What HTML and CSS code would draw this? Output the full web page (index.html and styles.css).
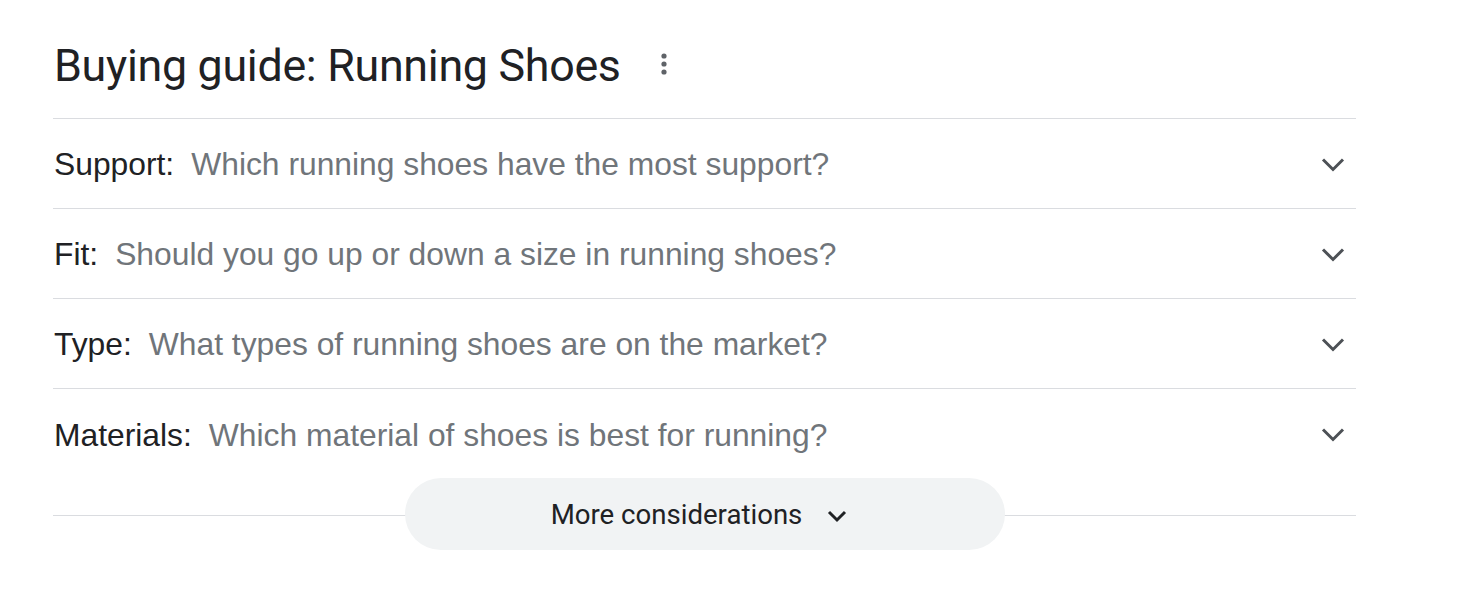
FILE: index.html
```html
<!DOCTYPE html>
<html>
<head>
<meta charset="utf-8">
<link rel="stylesheet" href="styles.css">
</head>
<body>
<div class="guide">
  <div class="header">
    <h1 class="title">Buying guide: Running Shoes</h1>
    <span class="more">
      <svg width="6" height="24" viewBox="0 0 6 24"><circle cx="3" cy="4" r="2.6" fill="#5f6368"/><circle cx="3" cy="12" r="2.6" fill="#5f6368"/><circle cx="3" cy="20" r="2.6" fill="#5f6368"/></svg>
    </span>
  </div>
  <div class="row">
    <span class="label">Support:</span><span class="q">Which running shoes have the most support?</span>
    <svg class="chev" width="26" height="26" viewBox="0 0 26 26"><path d="M3 8.5l10 10 10-10" fill="none" stroke="#4d5156" stroke-width="3"/></svg>
  </div>
  <div class="row">
    <span class="label">Fit:</span><span class="q">Should you go up or down a size in running shoes?</span>
    <svg class="chev" width="26" height="26" viewBox="0 0 26 26"><path d="M3 8.5l10 10 10-10" fill="none" stroke="#4d5156" stroke-width="3"/></svg>
  </div>
  <div class="row">
    <span class="label">Type:</span><span class="q">What types of running shoes are on the market?</span>
    <svg class="chev" width="26" height="26" viewBox="0 0 26 26"><path d="M3 8.5l10 10 10-10" fill="none" stroke="#4d5156" stroke-width="3"/></svg>
  </div>
  <div class="row last">
    <span class="label">Materials:</span><span class="q">Which material of shoes is best for running?</span>
    <svg class="chev" width="26" height="26" viewBox="0 0 26 26"><path d="M3 8.5l10 10 10-10" fill="none" stroke="#4d5156" stroke-width="3"/></svg>
  </div>
  <div class="footer">
    <button class="btn">More considerations
      <svg width="22" height="22" viewBox="0 0 22 22"><path d="M3 7l8 8 8-8" fill="none" stroke="#202124" stroke-width="3"/></svg>
    </button>
  </div>
</div>
</body>
</html>
```

FILE: styles.css
```css
html, body {
  margin: 0;
  padding: 0;
  background: #fff;
}
.guide {
  width: 1303px;
  margin-left: 53px;
  font-family: "Liberation Sans", Arial, sans-serif;
}
.header {
  display: flex;
  align-items: center;
  height: 119px;
  border-bottom: 1px solid #dadce0;
  box-sizing: border-box;
}
.title {
  margin: 0 0 0 1px;
  padding-top: 12px;
  font-family: Roboto, "Open Sans", sans-serif;
  font-weight: 400;
  font-size: 44.8px;
  color: #202124;
  letter-spacing: -0.3px;
}
.more {
  display: flex;
  margin-left: 40px;
  margin-top: 10px;
}
.row {
  display: flex;
  align-items: center;
  height: 90px;
  border-bottom: 1px solid #dadce0;
  box-sizing: border-box;
  font-size: 31.8px;
  padding-left: 1px;
  padding-top: 2px;
}
.row.last {
  border-bottom: none;
}
.label {
  color: #202124;
  margin-right: 17px;
}
.q {
  color: #70757a;
  flex: 1;
}
.chev {
  margin-right: 10px;
  margin-top: -2px;
}
.footer {
  display: flex;
  justify-content: center;
  align-items: center;
  height: 73px;
  background: linear-gradient(#dadce0, #dadce0) no-repeat left 36px / 100% 1px;
}
.btn {
  width: 600px;
  height: 72px;
  margin-top: -3px;
  border: none;
  border-radius: 36px;
  background: #f1f3f4;
  font-family: Roboto, "Liberation Sans", sans-serif;
  font-size: 27.6px;
  color: #202124;
  display: flex;
  align-items: center;
  justify-content: center;
  gap: 24px;
  padding: 0 10px 0 0;
}
.btn svg {
  margin-top: 4px;
}
```
